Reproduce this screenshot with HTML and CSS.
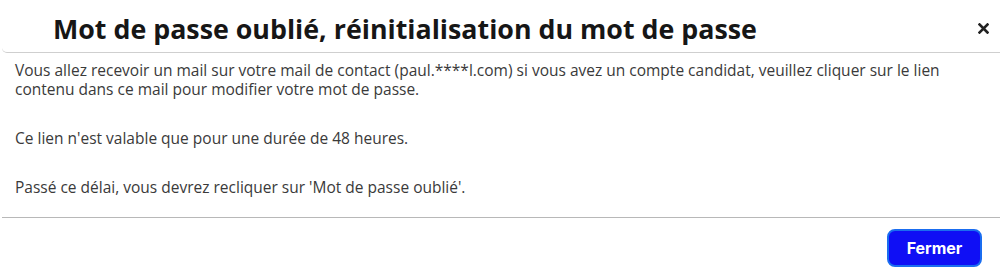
FILE: index.html
```html
<!DOCTYPE html>
<html lang="fr">
<head>
<meta charset="utf-8">
<link rel="stylesheet" href="styles.css">
</head>
<body>
<div class="modal">
  <div class="modal-header">
    <h1 class="modal-title">Mot de passe oublié, réinitialisation du mot de passe</h1>
    <button class="close" aria-label="Fermer">
      <svg width="11" height="11" viewBox="0 0 11 11"><path d="M1.5 1.5 L9.5 9.5 M9.5 1.5 L1.5 9.5" stroke="#222" stroke-width="2.6" stroke-linecap="square"/></svg>
    </button>
  </div>
  <div class="modal-body">
    <p>Vous allez recevoir un mail sur votre mail de contact (paul.****l.com) si vous avez un compte candidat, veuillez cliquer sur le lien contenu dans ce mail pour modifier votre mot de passe.</p>
    <p>Ce lien n'est valable que pour une durée de 48 heures.</p>
    <p>Passé ce délai, vous devrez recliquer sur 'Mot de passe oublié'.</p>
  </div>
  <div class="modal-footer">
    <button class="btn-primary">Fermer</button>
  </div>
</div>
</body>
</html>
```

FILE: styles.css
```css
html, body {
  margin: 0;
  padding: 0;
  background: #fff;
}
.modal {
  width: 1000px;
  height: 280px;
  font-family: "Open Sans", "Lato", sans-serif;
}
.modal-header {
  display: flex;
  align-items: center;
  justify-content: space-between;
  height: 53px;
  box-sizing: border-box;
  padding: 4px 11px 0 51px;
  margin-left: 2px;
  border-bottom: 1px solid #cfcfcf;
  border-bottom-left-radius: 5px;
}
.modal-title {
  margin: 0;
  font-size: 26.8px;
  font-weight: 700;
  color: #161616;
  letter-spacing: 0;
}
.close {
  border: 0;
  background: none;
  padding: 0;
  width: 11px;
  height: 11px;
  display: flex;
  cursor: pointer;
}
.modal-body {
  padding: 8px 20px 0 13px;
  height: 165px;
  box-sizing: border-box;
  border-bottom: 1px solid #b8b8b8;
  margin-left: 2px;
}
.modal-body p {
  margin: 0 0 30px 0;
  font-size: 15.5px;
  line-height: 19px;
  color: #3a3a3a;
}
.modal-footer {
  display: flex;
  justify-content: flex-end;
  padding: 11px 18px 0 0;
}
.btn-primary {
  width: 95px;
  height: 38px;
  border: 2px solid #1a6df0;
  border-radius: 8px;
  background: #0f0ff5;
  color: #fff;
  font-family: "Inter", "Roboto", sans-serif;
  font-weight: 700;
  font-size: 16px;
  cursor: pointer;
}
```
